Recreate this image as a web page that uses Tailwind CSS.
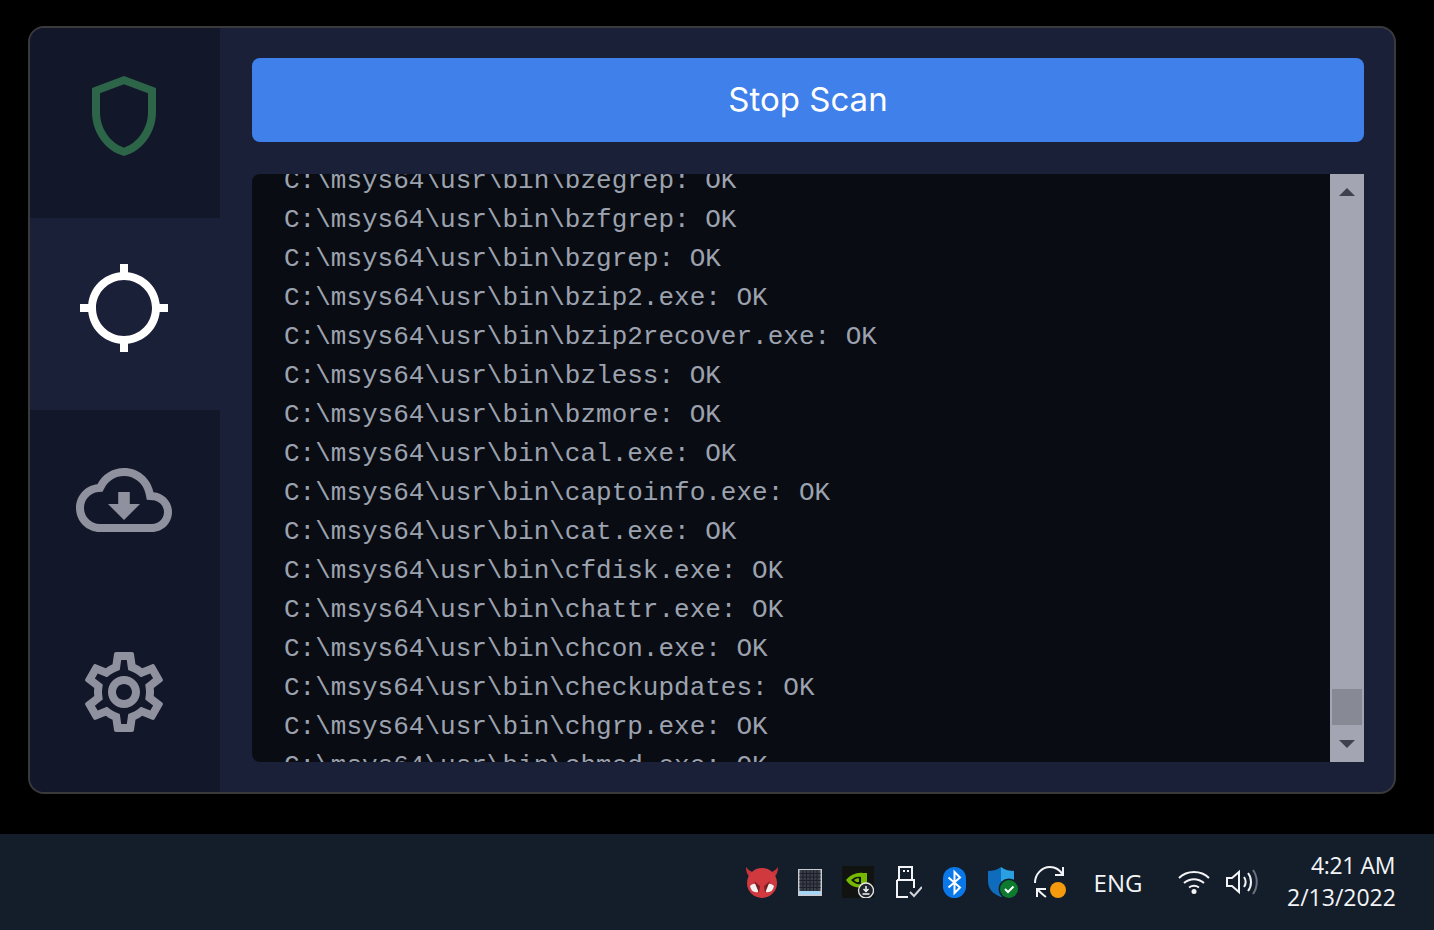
<!DOCTYPE html>
<html lang="en">
<head>
  <meta charset="UTF-8" />
  <title>Scan</title>
  <script src="https://cdn.jsdelivr.net/npm/@tailwindcss/browser@4"></script>
</head>
<body class="bg-black w-[1434px] h-[930px] overflow-hidden flex flex-col font-['Open_Sans',sans-serif]">

  <!-- app window -->
  <div class="h-[834px] pt-[26px] pl-[28px] pr-[38px]">
    <div class="w-[1368px] h-[768px] rounded-[16px] border-2 border-[#3a3a3d] bg-[#1b2039] overflow-hidden flex">

      <div class="w-[190px] shrink-0 flex flex-col">
        <div class="h-[190px] bg-[#13172a] flex items-center justify-center pb-[14px] pr-[2px]">
          <svg viewBox="0 0 24 24" class="w-[96px] h-[96px] fill-[#2d6549]"><path d="M12 2 4 5v6.09c0 5.05 3.41 9.76 8 10.91 4.59-1.15 8-5.86 8-10.91V5l-8-3zm6 9.09c0 4-2.55 7.7-6 8.83-3.45-1.13-6-4.82-6-8.83V6.31l6-2.25 6 2.25v4.78z"/></svg>
        </div>
        <div class="h-[192px] bg-[#1b2039] flex items-center justify-center pb-[12px] pr-[2px]">
          <svg viewBox="0 0 24 24" class="w-[96px] h-[96px] fill-white"><path d="M20.94 11c-.46-4.17-3.77-7.48-7.94-7.94V1h-2v2.06C6.83 3.52 3.52 6.83 3.06 11H1v2h2.06c.46 4.17 3.77 7.48 7.94 7.94V23h2v-2.06c4.17-.46 7.48-3.77 7.94-7.94H23v-2h-2.06zM12 19c-3.87 0-7-3.13-7-7s3.13-7 7-7 7 3.13 7 7-3.13 7-7 7z"/></svg>
        </div>
        <div class="h-[192px] bg-[#13172a] flex items-center justify-center pb-[12px] pr-[2px]">
          <svg viewBox="0 0 24 24" class="w-[96px] h-[96px] fill-[#8f919e]"><path d="M19.35 10.04C18.67 6.59 15.64 4 12 4 9.11 4 6.6 5.64 5.35 8.04 2.34 8.36 0 10.91 0 14c0 3.31 2.69 6 6 6h13c2.76 0 5-2.24 5-5 0-2.64-2.05-4.78-4.65-4.96zM19 18H6c-2.21 0-4-1.79-4-4 0-2.05 1.53-3.76 3.56-3.97l1.07-.11.5-.95C8.08 7.14 9.94 6 12 6c2.62 0 4.88 1.86 5.39 4.43l.3 1.5 1.53.11c1.56.1 2.78 1.41 2.78 2.96 0 1.65-1.35 3-3 3zm-5.55-8h-2.9v3H8l4 4 4-4h-2.55z"/></svg>
        </div>
        <div class="h-[190px] bg-[#13172a] flex items-center justify-center pb-[10px] pr-[2px]">
          <svg viewBox="0 0 24 24" class="w-[96px] h-[96px] fill-[#8f919e]"><path d="M19.43 12.98c.04-.32.07-.64.07-.98 0-.34-.03-.66-.07-.98l2.11-1.65c.19-.15.24-.42.12-.64l-2-3.46c-.09-.16-.26-.25-.44-.25-.06 0-.12.01-.17.03l-2.49 1c-.52-.4-1.08-.73-1.69-.98l-.38-2.65C14.46 2.18 14.25 2 14 2h-4c-.25 0-.46.18-.49.42l-.38 2.65c-.61.25-1.17.59-1.69.98l-2.49-1c-.06-.02-.12-.03-.18-.03-.17 0-.34.09-.43.25l-2 3.46c-.13.22-.07.49.12.64l2.11 1.65c-.04.32-.07.65-.07.98 0 .33.03.66.07.98l-2.11 1.65c-.19.15-.24.42-.12.64l2 3.46c.09.16.26.25.44.25.06 0 .12-.01.17-.03l2.49-1c.52.4 1.08.73 1.69.98l.38 2.65c.03.24.24.42.49.42h4c.25 0 .46-.18.49-.42l.38-2.65c.61-.25 1.17-.59 1.69-.98l2.49 1c.06.02.12.03.18.03.17 0 .34-.09.43-.25l2-3.46c.12-.22.07-.49-.12-.64l-2.11-1.65zm-1.98-1.71c.04.31.05.52.05.73 0 .21-.02.43-.05.73l-.14 1.13.89.7 1.08.84-.7 1.21-1.27-.51-1.04-.42-.9.68c-.43.32-.84.56-1.25.73l-1.06.43-.16 1.13-.2 1.35h-1.4l-.19-1.35-.16-1.13-1.06-.43c-.43-.18-.83-.41-1.23-.71l-.91-.7-1.06.43-1.27.51-.7-1.21 1.08-.84.89-.7-.14-1.13c-.03-.31-.05-.54-.05-.74s.02-.43.05-.73l.14-1.13-.89-.7-1.08-.84.7-1.21 1.27.51 1.04.42.9-.68c.43-.32.84-.56 1.25-.73l1.06-.43.16-1.13.2-1.35h1.39l.19 1.35.16 1.13 1.06.43c.43.18.83.41 1.23.71l.91.7 1.06-.43 1.27-.51.7 1.21-1.07.85-.89.7.14 1.13zM12 8c-2.21 0-4 1.79-4 4s1.79 4 4 4 4-1.79 4-4-1.79-4-4-4zm0 6c-1.1 0-2-.9-2-2s.9-2 2-2 2 .9 2 2-.9 2-2 2z"/></svg>
        </div>
      </div>

      <div class="flex-1 pt-[30px] pl-[32px] pr-[30px] pb-[30px] flex flex-col gap-[32px]">
        <button class="h-[84px] rounded-[8px] bg-[#3f80ea] text-white text-[33px] font-['Inter',sans-serif]">Stop Scan</button>

        <div class="h-[588px] flex">
          <div class="flex-1 overflow-hidden pl-[32px] rounded-l-[8px] bg-[#0a0c14]">
            <div class="-mt-[12px] font-['Liberation_Mono',monospace] text-[26px] leading-[39px] text-[#9ca3af] whitespace-nowrap">
              <div>C:\msys64\usr\bin\bzegrep: OK</div>
              <div>C:\msys64\usr\bin\bzfgrep: OK</div>
              <div>C:\msys64\usr\bin\bzgrep: OK</div>
              <div>C:\msys64\usr\bin\bzip2.exe: OK</div>
              <div>C:\msys64\usr\bin\bzip2recover.exe: OK</div>
              <div>C:\msys64\usr\bin\bzless: OK</div>
              <div>C:\msys64\usr\bin\bzmore: OK</div>
              <div>C:\msys64\usr\bin\cal.exe: OK</div>
              <div>C:\msys64\usr\bin\captoinfo.exe: OK</div>
              <div>C:\msys64\usr\bin\cat.exe: OK</div>
              <div>C:\msys64\usr\bin\cfdisk.exe: OK</div>
              <div>C:\msys64\usr\bin\chattr.exe: OK</div>
              <div>C:\msys64\usr\bin\chcon.exe: OK</div>
              <div>C:\msys64\usr\bin\checkupdates: OK</div>
              <div>C:\msys64\usr\bin\chgrp.exe: OK</div>
              <div>C:\msys64\usr\bin\chmod.exe: OK</div>
            </div>
          </div>
          <!-- scrollbar -->
          <div class="w-[34px] shrink-0 bg-[#a3a6b2] flex flex-col items-center">
            <svg viewBox="0 0 16 8" class="w-[16px] h-[8px] mt-[14px] fill-[#3f424c]"><path d="M8 0 16 8H0z"/></svg>
            <div class="flex-1"></div>
            <div class="w-[30px] h-[36px] bg-[#878a94]"></div>
            <svg viewBox="0 0 16 8" class="w-[16px] h-[8px] mt-[15px] mb-[14px] fill-[#3f424c]"><path d="M8 8 0 0H16z"/></svg>
          </div>
        </div>
      </div>
    </div>
  </div>

  <!-- taskbar -->
  <div class="h-[96px] bg-[#141e2b] flex items-center justify-end pr-[39px] text-[#f3f4f6]">
    <div class="flex items-center">
      <div class="w-[48px] h-[48px] flex items-center justify-center">
        <svg viewBox="0 0 34 32" class="w-[34px] h-[32px]">
          <path d="M1 1c0 7 3 11 8 12l4-6C8 7 4 5 1 1zM33 1c0 7-3 11-8 12l-4-6c5 0 9-2 12-6z" fill="#c9343a"/>
          <circle cx="17" cy="17" r="15" fill="#d03a3f"/>
          <path d="M5 20c3-3 7-3 9 0l-1 6c-4 1-7-1-8-6zM29 20c-3-3-7-3-9 0l1 6c4 1 7-1 8-6z" fill="#f2f2f2"/>
          <path d="M9 15l6 5-1 7zM25 15l-6 5 1 7z" fill="#7c1f25"/>
        </svg>
      </div>
      <div class="w-[48px] h-[48px] flex items-center justify-center">
        <svg viewBox="0 0 24 27" class="w-[24px] h-[27px]">
          <rect width="24" height="27" fill="#c8ccd2"/>
          <rect x="1.500" y="1" width="21" height="21" fill="#3a3e48"/>
          <path d="M1.500 4.500h21M1.500 8h21M1.500 11.500h21M1.500 15h21M1.500 18.500h21M5 1v21M8.500 1v21M12 1v21M15.500 1v21M19 1v21" stroke="#1d2028" stroke-width="1"/>
          <rect x="1.500" y="22" width="21" height="3.500" fill="#a6d6f7"/>
        </svg>
      </div>
      <div class="w-[48px] h-[48px] flex items-center justify-center">
        <svg viewBox="0 0 32 32" class="w-[32px] h-[32px]">
          <rect width="32" height="32" fill="#10130f"/>
          <path d="M4 14c4-5 11-8 17-7h4v14h-6c-6 1-11-1-15-7z" fill="#76b900"/>
          <path d="M9 14c3-3 7-4 10-3v7c-4 1-7-1-10-4z" fill="#10130f"/>
          <path d="M12 14c2-1.500 4-2 5-1.500v3.500c-2 .5-4-.5-5-2z" fill="#76b900"/>
          <circle cx="24" cy="24.500" r="7.500" fill="#20242b" stroke="#e5e7eb" stroke-width="1.300"/>
          <path d="M24 20v5M21.500 23l2.500 2.500 2.500-2.500M20.500 28h7" stroke="#f3f4f6" stroke-width="1.500" fill="none"/>
        </svg>
      </div>
      <div class="w-[48px] h-[48px] flex items-center justify-center">
        <svg viewBox="0 0 28 32" class="w-[28px] h-[32px] ml-[4px]" fill="none" stroke="#f3f4f6" stroke-width="2">
          <path d="M5 14V1h13v13"/>
          <path d="M3 14h17v8M3 14v17h11"/>
          <path d="M9 5h2M13 5h2"/>
          <path d="M16 26l4 4 8-9" stroke="#d1d5db"/>
        </svg>
      </div>
      <div class="w-[48px] h-[48px] flex items-center justify-center">
        <svg viewBox="0 0 23 31" class="w-[23px] h-[31px]">
          <rect width="23" height="31" rx="11.500" fill="#0a78e8"/>
          <path d="M5.500 10.500 17 20.500l-5.500 5.500V5l5.500 5.500-11.500 10" fill="none" stroke="#fff" stroke-width="2"/>
        </svg>
      </div>
      <div class="w-[48px] h-[48px] flex items-center justify-center">
        <svg viewBox="0 0 32 32" class="w-[32px] h-[32px]">
          <path d="M15 1C11 4 6 5 2 5v10c0 8 5 13 13 16z" fill="#0f6cbd"/>
          <path d="M15 1c4 3 9 4 13 4v10c0 8-5 13-13 16z" fill="#2aa0e0"/>
          <circle cx="23" cy="23" r="10.500" fill="#141e2b"/>
          <circle cx="23" cy="23" r="9" fill="#0c7a2f"/>
          <path d="M19 23l3 3 5.500-5.500" fill="none" stroke="#fff" stroke-width="2"/>
        </svg>
      </div>
      <div class="w-[48px] h-[48px] flex items-center justify-center">
        <svg viewBox="0 0 32 32" class="w-[32px] h-[32px]">
          <path d="M1 17C1 8 8 1 16 1c6 0 10 3 13 8" fill="none" stroke="#f3f4f6" stroke-width="2"/>
          <path d="M21 9h8V1" fill="none" stroke="#f3f4f6" stroke-width="2"/>
          <path d="M12 23H3v8M3 23c3 3 6 6 9 8" fill="none" stroke="#f3f4f6" stroke-width="2"/>
          <circle cx="24" cy="24" r="8" fill="#f59a0c"/>
        </svg>
      </div>
    </div>

    <div class="w-[88px] text-center text-[24px] pt-[2px]">ENG</div>
    <div class="w-[8px]"></div>

    <div class="flex items-center">
      <div class="w-[48px] h-[48px] flex items-center justify-center">
        <svg viewBox="0 0 32 24" class="w-[32px] h-[24px]" fill="none" stroke="#f3f4f6" stroke-width="2">
          <path d="M1 8c8-8 22-8 30 0M6 13c6-5 14-5 20 0M11 17.500c3-2 7-2 10 0"/>
          <circle cx="16" cy="21.500" r="2.500" fill="#f3f4f6" stroke="none"/>
        </svg>
      </div>
      <div class="w-[48px] h-[48px] flex items-center justify-center">
        <svg viewBox="0 0 32 28" class="w-[32px] h-[28px]" fill="none" stroke="#f3f4f6" stroke-width="2">
          <path d="M1 10v8h5l7 6V4L6 10z"/>
          <path d="M18 9c2 3 2 7 0 10M22 5c4 5 4 13 0 18"/>
          <path d="M27 2c5 7 5 17 0 24" stroke="#6b7280"/>
        </svg>
      </div>
    </div>

    <div class="w-[21px]"></div>
    <div class="w-[108px] -mt-[2px] text-right text-[23px] leading-[32px] whitespace-nowrap">
      <div class="tracking-[-0.4px]">4:21 AM</div>
      <div>2/13/2022</div>
    </div>
  </div>

</body>
</html>
